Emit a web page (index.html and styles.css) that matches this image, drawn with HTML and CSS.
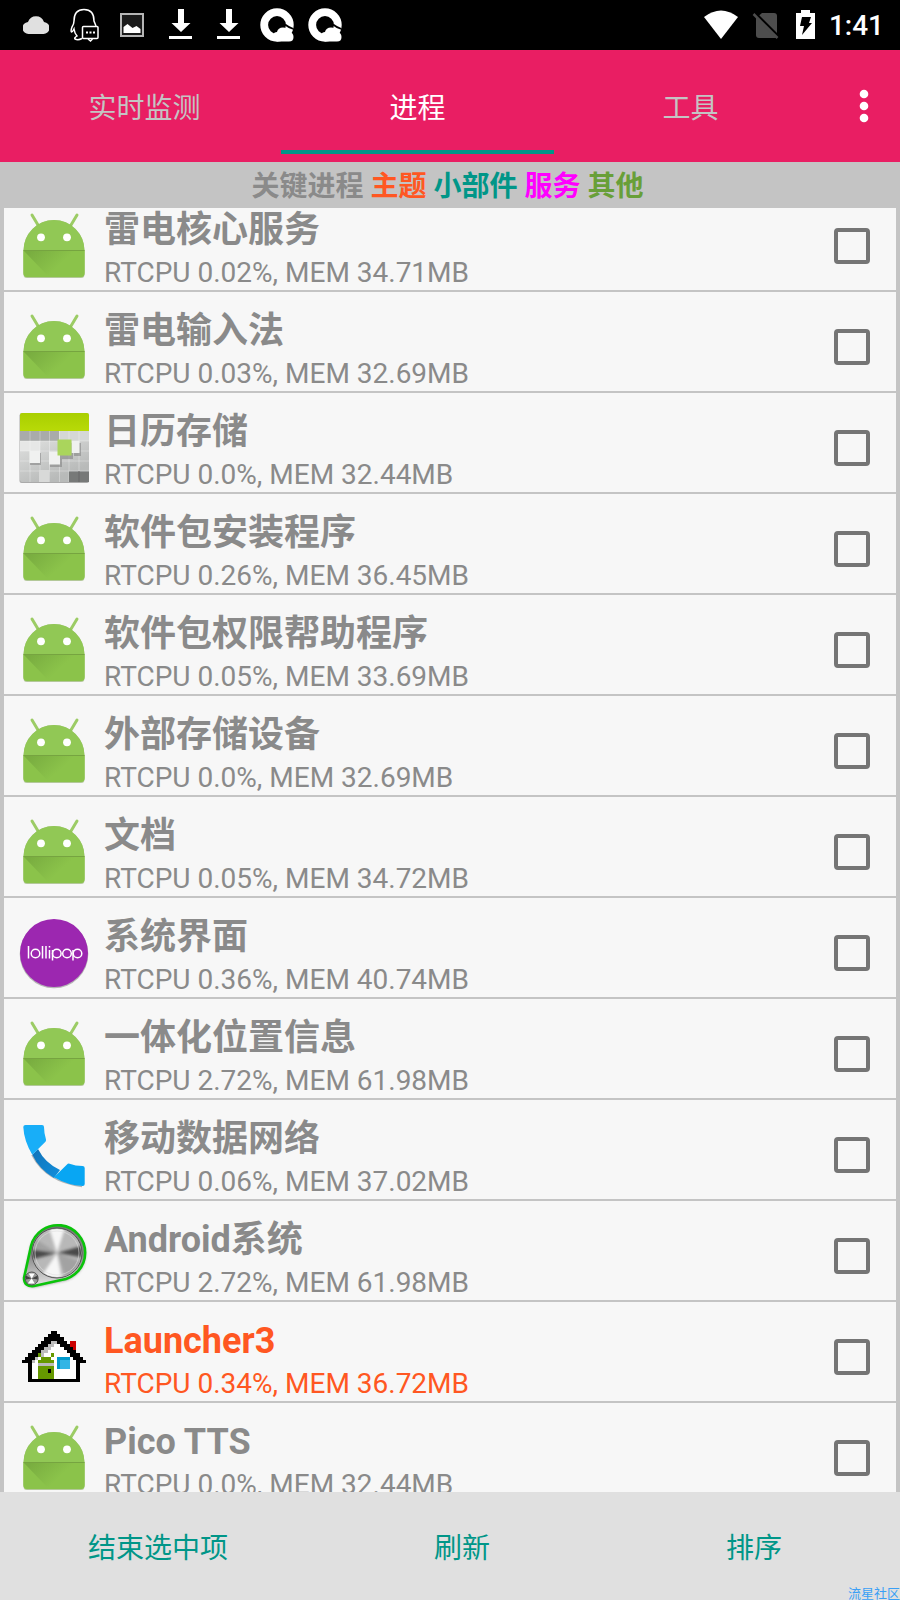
FILE: index.html
```html
<!DOCTYPE html>
<html lang="zh-CN">
<head>
<meta charset="utf-8">
<meta name="viewport" content="width=device-width, initial-scale=1">
<title>进程</title>
<link rel="stylesheet" href="styles.css">
</head>
<body>
<svg class="defs" aria-hidden="true">
  <defs>
    <linearGradient id="fold" gradientUnits="userSpaceOnUse" x1="14" y1="40" x2="34" y2="62">
      <stop offset="0" stop-color="#79ad40"/><stop offset="1" stop-color="#8bc34a"/>
    </linearGradient>
    <linearGradient id="lime" x1="0" y1="0" x2="0" y2="1">
      <stop offset="0" stop-color="#a9cf00"/><stop offset="1" stop-color="#b8da08"/>
    </linearGradient>
    <linearGradient id="tiles" x1="0" y1="0" x2="0.4" y2="1">
      <stop offset="0" stop-color="#c4c6c5"/><stop offset="0.4" stop-color="#dcdddc"/><stop offset="1" stop-color="#b8bab9"/>
    </linearGradient>
    <linearGradient id="handle" x1="0" y1="0" x2="1" y2="1">
      <stop offset="0" stop-color="#1272b8"/><stop offset="1" stop-color="#118fdc"/>
    </linearGradient>
    <linearGradient id="steel" x1="0" y1="0" x2="0" y2="1">
      <stop offset="0" stop-color="#777"/><stop offset="0.5" stop-color="#888"/><stop offset="1" stop-color="#e5e5e5"/>
    </linearGradient>
    <filter id="soft" x="-20%" y="-20%" width="140%" height="140%"><feGaussianBlur stdDeviation="1.6"/></filter>
    <clipPath id="dial"><circle cx="39" cy="33" r="24"/></clipPath>
    <symbol id="droid" viewBox="0 0 72 72">
      <path d="M14 5l6 10M59 5l-6 10" stroke="#9ccc65" stroke-width="3" stroke-linecap="round"/>
      <path d="M5.500 64.500v-24a30.500 30.500 0 0 1 61 0v24q0 3.500-3.500 3.500H9q-3.500 0-3.500-3.500z" fill="#6f9a3c" opacity="0.500"/>
      <path d="M5.500 63v-22.500a30.500 30.500 0 0 1 61 0V63q0 4-4 4h-53q-4 0-4-4z" fill="#91c855"/>
      <path d="M5.500 40.500h61V63q0 4-4 4h-53q-4 0-4-4z" fill="#8bc34a"/>
      <path d="M6 41h50v26H31z" fill="url(#fold)"/>
      <path d="M5.500 40.500h61" stroke="#76a440" stroke-width="1.200"/>
      <circle cx="23" cy="27.300" r="3.900" fill="#fff"/><circle cx="49" cy="27.300" r="3.900" fill="#fff"/>
    </symbol>
    <symbol id="download" viewBox="0 0 24 32">
      <path d="M9 0h6v14h6.500L12 23 2.500 14H9zM0 27h23v3H0z" fill="#fff"/>
    </symbol>
    <symbol id="qcloud" viewBox="0 0 34 34">
      <circle cx="17" cy="17" r="12.800" fill="none" stroke="#fff" stroke-width="7.800"/>
      <path d="M13 27q1-3 4-3 1-4.500 6-4.500 4.500 0 6 4.500 4.500.5 4.500 5 0 4.500-4.500 4.500H17z" fill="#fff"/>
      <path d="M25 16.500q3 2.500 8.500 4.500" fill="none" stroke="#000" stroke-width="1.800"/>
    </symbol>
  </defs>
</svg>
<div class="screen">
  <header>
    <div class="status">
      <div class="status-left">
        <svg width="26" height="20" viewBox="0 0 26 20"><path d="M6 19a6 6 0 0 1-1-12 8.500 8.500 0 0 1 16 0 6 6 0 0 1-1 12z" fill="#e0e0e0"/></svg>
        <svg width="30" height="34" viewBox="0 0 30 34" fill="none" stroke="#fff" stroke-width="1.500"><path d="M4 13C4 5 8 1.500 14 1.500S24 5 24 13l2 5M4 13q0 3-2 6-1.500 4-.5 5 1 0 2.500-3 .5 4 3 7-3 2-2 3 3 1.500 7-.5"/><rect x="12.500" y="18.500" width="15.500" height="12" rx="1"/><path d="M18 31l2.500 2 2-2"/><path d="M16 24.500h2m1.500 0h2m1.500 0h2" stroke-width="2"/></svg>
        <svg width="24" height="24" viewBox="0 0 24 24"><rect x="1" y="1" width="22" height="22" fill="#1a1a1a" stroke="#b5b5b5" stroke-width="2"/><path d="M3.500 20v-6l4-3 5 4 4-2 4 3v4z" fill="#fff"/></svg>
        <svg width="24" height="32"><use href="#download"/></svg>
        <svg width="24" height="32"><use href="#download"/></svg>
        <svg width="34" height="34"><use href="#qcloud"/></svg>
        <svg width="34" height="34"><use href="#qcloud"/></svg>
      </div>
      <div class="status-right">
        <svg width="36" height="30" viewBox="0 0 36 30"><path d="M1 7q17-13 34 0L18 29z" fill="#fff"/></svg>
        <svg width="28" height="28" viewBox="0 0 28 28"><path d="M4 7l6-5h12q3 0 3 3v22H7q-3 0-3-3z" fill="#4d4d4d"/><path d="M3 2l24 24" stroke="#000" stroke-width="3"/><path d="M1.500 3l24 24" stroke="#4d4d4d" stroke-width="2.500"/></svg>
        <svg width="20" height="30" viewBox="0 0 20 30"><path d="M0 3h5V0h9v3h5v26H0z" fill="#fff"/><path d="M6 7h9l-2 6h3L6 25l2-9H4z" fill="#000"/></svg>
        <span class="clock">1:41</span>
      </div>
    </div>
    <nav class="tabs">
      <button class="tab">实时监测</button>
      <button class="tab tab-active">进程</button>
      <button class="tab">工具</button>
      <button class="more" aria-label="更多选项"><svg width="10" height="34" viewBox="0 0 10 34" fill="#fff"><circle cx="5" cy="5" r="4.300"/><circle cx="5" cy="17" r="4.300"/><circle cx="5" cy="29" r="4.300"/></svg></button>
    </nav>
    <p class="legend"><span>关键进程</span> <span class="c-theme">主题</span> <span class="c-widget">小部件</span> <span class="c-service">服务</span> <span class="c-other">其他</span></p>
  </header>
  <main class="list-wrap">
    <ul class="list">
      <li><label class="row"><svg class="icon"><use href="#droid"/></svg><span class="info"><b class="name">雷电核心服务</b><span class="stat">RTCPU 0.02%, MEM 34.71MB</span></span><input class="check" type="checkbox"></label></li>
      <li><label class="row"><svg class="icon"><use href="#droid"/></svg><span class="info"><b class="name">雷电输入法</b><span class="stat">RTCPU 0.03%, MEM 32.69MB</span></span><input class="check" type="checkbox"></label></li>
      <li><label class="row"><svg class="icon" viewBox="0 0 72 72">
        <rect x="1.500" y="1.500" width="69.500" height="69.500" rx="2" fill="#aaa"/>
        <rect x="2" y="1" width="69" height="69" rx="2" fill="url(#tiles)"/>
        <path d="M2 19V3q0-2 2-2h65q2 0 2 2v16z" fill="url(#lime)"/>
        <path d="M2 19h39v10H2z" fill="#a9abaa"/><path d="M41 19h30v10H41z" fill="#d5d7d6"/><path d="M2 29h20v10H2z" fill="#e6e7e6"/>
        <path d="M12 19v51M22 19v51M31.500 19v51M41.500 19v51M51 19v51M61 19v51M2 29h69M2 39h69M2 49h69M2 59h69" stroke="#fff" stroke-opacity="0.300" stroke-width="1"/>
        <path d="M51 59.500h20V70H51z" fill="#777978"/><path d="M61 59v11" stroke="#666"/>
        <path d="M21 58h10v12H21z" fill="#d8d9d8"/>
        <path d="M12 41h11v12H12zM32 42h12v13H32zM42 31h13v16H42zM56 31h7v13h-7z" fill="#777" opacity="0.500"/>
        <path d="M11.500 39H22v12H11.500zM31 39.500h11v13H31zM53.500 29h8v12h-8z" fill="#f0f1f0"/>
        <path d="M39.500 27.500h14v16h-14z" fill="#aad55c"/>
      </svg><span class="info"><b class="name">日历存储</b><span class="stat">RTCPU 0.0%, MEM 32.44MB</span></span><input class="check" type="checkbox"></label></li>
      <li><label class="row"><svg class="icon"><use href="#droid"/></svg><span class="info"><b class="name">软件包安装程序</b><span class="stat">RTCPU 0.26%, MEM 36.45MB</span></span><input class="check" type="checkbox"></label></li>
      <li><label class="row"><svg class="icon"><use href="#droid"/></svg><span class="info"><b class="name">软件包权限帮助程序</b><span class="stat">RTCPU 0.05%, MEM 33.69MB</span></span><input class="check" type="checkbox"></label></li>
      <li><label class="row"><svg class="icon"><use href="#droid"/></svg><span class="info"><b class="name">外部存储设备</b><span class="stat">RTCPU 0.0%, MEM 32.69MB</span></span><input class="check" type="checkbox"></label></li>
      <li><label class="row"><svg class="icon"><use href="#droid"/></svg><span class="info"><b class="name">文档</b><span class="stat">RTCPU 0.05%, MEM 34.72MB</span></span><input class="check" type="checkbox"></label></li>
      <li><label class="row"><svg class="icon" viewBox="0 0 72 72">
        <circle cx="36" cy="37" r="34.300" fill="#888" opacity="0.600"/><circle cx="36" cy="36" r="34" fill="#9c27b0"/>
        <g fill="none" stroke="#fff" stroke-width="1.500"><path d="M10.500 29v12.500M24.500 29v12.500M28 29v12.500M31.500 33v8.500M31.500 29v1.500M34.500 33v10.500M55 33v10.500"/><circle cx="17.500" cy="36.500" r="4.300"/><circle cx="38.800" cy="36.500" r="4.300"/><circle cx="49" cy="36.500" r="4.300"/><circle cx="59.500" cy="36.500" r="4.300"/></g>
      </svg><span class="info"><b class="name">系统界面</b><span class="stat">RTCPU 0.36%, MEM 40.74MB</span></span><input class="check" type="checkbox"></label></li>
      <li><label class="row"><svg class="icon"><use href="#droid"/></svg><span class="info"><b class="name">一体化位置信息</b><span class="stat">RTCPU 2.72%, MEM 61.98MB</span></span><input class="check" type="checkbox"></label></li>
      <li><label class="row"><svg class="icon" viewBox="0 0 72 72">
        <path d="M14 36q14 27 50 31.500" fill="none" stroke="#999" stroke-width="1.500" opacity="0.700"/>
        <path d="M14.300 35.700L20 30q7 14 22 21l-6 8Q21 50 14.300 35.700z" fill="url(#handle)"/>
        <path d="M7.500 6H24q2 0 2 2 0 6 2 12.500.3 1.500-.8 2.500L14.300 35.700Q6 22 5.300 8q0-2 2.200-2z" fill="#18aef8"/>
        <path d="M66.700 49v16q0 2-2 2Q50 66.500 36 58.300L49 45.500q1-1.200 2.500-.8 6 2.200 13 2.300 2.200 0 2.200 2z" fill="#08a6f3"/>
      </svg><span class="info"><b class="name">移动数据网络</b><span class="stat">RTCPU 0.06%, MEM 37.02MB</span></span><input class="check" type="checkbox"></label></li>
      <li><label class="row"><svg class="icon" viewBox="0 0 72 72">
        <path d="M13 27A27.500 27.500 0 1 1 44 61L16 67Q6 67 6 58z" fill="#333" opacity="0.600" filter="url(#soft)"/>
        <path d="M13 26A27.500 27.500 0 1 1 43 60L16 66Q6 67 6 58z" fill="url(#steel)" stroke="#0ac40a" stroke-width="2.600"/>
        <circle cx="39" cy="33" r="25" fill="#b8b8b8" stroke="#555" stroke-width="1"/>
        <g clip-path="url(#dial)"><g filter="url(#soft)">
          <path d="M39 33L4 28v14zM39 33l35-10v16z" fill="#4a4a4a"/>
          <path d="M39 33L27-5h24zM39 33L14 70h32z" fill="#f6f6f6"/>
          <path d="M39 33L4 10v17zM39 33l35 13v22L52 70z" fill="#a2a2a2"/>
        </g></g>
        <circle cx="39" cy="33" r="22" fill="none" stroke="#ddd" stroke-width="1" opacity="0.600"/>
        <circle cx="13.700" cy="58.500" r="6.500" fill="#999" stroke="#555" stroke-width="1"/><path d="M13.700 58.500l-6-3v4zM13.700 58.500l6-3v4z" fill="#444"/><path d="M13.700 58.500l-3-5h6zM13.700 58.500l-4 5h7z" fill="#fff"/>
      </svg><span class="info"><b class="name">Android系统</b><span class="stat">RTCPU 2.72%, MEM 61.98MB</span></span><input class="check" type="checkbox"></label></li>
      <li><label class="row row-theme"><svg class="icon" viewBox="0 0 72 72"><g transform="translate(4 10) scale(3.200)" shape-rendering="crispEdges">
        <path d="M3 9L10 2l7 7v6H3z" fill="#fff"/>
        <path d="M15 3h2v3h-2z" fill="#c00"/><path d="M15 5h1v1h-1z" fill="#900"/>
        <path d="M9 3h2v1H9zM8 4h2v1H8zM7 5h2v1H7zM6 6h2v1H6zM5 7h2v1H5zM4 8h1v1H4zM3 9h1v1H3z" fill="#bdbdbd"/>
        <path d="M9 0h2v1H9zM8 1h4v1H8zM7 2h3v1H7zM10 2h3v1h-3zM6 3h3v1H6zM11 3h3v1h-3zM5 4h3v1H5zM12 4h3v1h-3zM4 5h3v1H4zM13 5h3v1h-3zM3 6h3v1H3zM14 6h3v1h-3zM2 7h3v1H2zM15 7h3v1h-3zM1 8h3v1H1zM16 8h3v1h-3zM0 9h3v1H0zM17 9h3v1h-3zM2 10h1v6H2zM17 10h1v6h-1zM3 15h14v1H3z" fill="#000"/>
        <path d="M5 7h1v1H5zM9 7h1v1H9zM6 8h3v1H6zM5 9h5v1H5zM5 11h5v4H5z" fill="#690"/><path d="M5 10h5v1H5z" fill="#bbb"/><path d="M8 12h1v1H8z" fill="#000"/>
        <path d="M11 8h4v4h-4z" fill="#09c"/><path d="M12 9h3v3h-3z" fill="#33b5e5"/>
      </g></svg><span class="info"><b class="name">Launcher3</b><span class="stat">RTCPU 0.34%, MEM 36.72MB</span></span><input class="check" type="checkbox"></label></li>
      <li><label class="row"><svg class="icon"><use href="#droid"/></svg><span class="info"><b class="name">Pico TTS</b><span class="stat">RTCPU 0.0%, MEM 32.44MB</span></span><input class="check" type="checkbox"></label></li>
    </ul>
  </main>
  <footer class="actions">
    <button class="action action-wide">结束选中项</button>
    <button class="action">刷新</button>
    <button class="action">排序</button>
    <span class="mark">流星社区</span>
  </footer>
</div>
</body>
</html>
```

FILE: styles.css
```css
* { box-sizing: border-box; }
body {
  margin: 0;
  font-family: Roboto, "Noto Sans CJK SC", sans-serif;
  font-size: 28px;
  color: #8a8a8a;
  background: #c4c4c4;
}
button {
  border: 0;
  padding: 0;
  background: none;
  font: inherit;
  color: inherit;
}
.defs { position: absolute; width: 0; height: 0; }
.screen { display: flex; flex-direction: column; height: 100vh; }

.status {
  display: flex;
  justify-content: space-between;
  align-items: center;
  height: 50px;
  padding: 0 16px 0 23px;
  background: #000;
}
.status-left { display: flex; align-items: center; gap: 14px; }
.status-left svg:nth-child(1) { margin-right: 7px; }
.status-left svg:nth-child(2) { margin-right: 6px; }
.status-left svg:nth-child(3) { margin-right: 11px; }
.status-left svg:nth-child(4) { margin-right: 10px; }
.status-left svg:nth-child(5) { margin-right: 5px; }
.status-right { display: flex; align-items: center; gap: 13px; }
.status-right svg:nth-child(2) { margin-right: 3px; }
.clock { font-size: 28px; font-weight: 500; line-height: 50px; padding-top: 2px; color: #fff; }

.tabs {
  display: flex;
  height: 112px;
  padding-left: 8px;
  background: #e91e63;
}
.tab {
  flex: 1;
  margin-bottom: 8px;
  padding-top: 12px;
  border-bottom: 4px solid transparent;
  color: #c4c4c4;
}
.tab-active { border-bottom-color: #009688; color: #fff; }
.more { display: flex; justify-content: center; align-items: center; width: 73px; }

.legend {
  margin: 0;
  padding: 4px 5px 0 0;
  line-height: 42px;
  text-align: center;
  font-weight: bold;
}
.c-theme { color: #ff5722; }
.c-widget { color: #009688; }
.c-service { color: #f0f; }
.c-other { color: #689f38; }

.list-wrap { flex: 1; min-height: 0; overflow: hidden; padding: 0 4px; }
.list { list-style: none; margin: -17px 0 0; padding: 0; }
.list li { border-bottom: 2px solid #c4c4c4; background: #f7f7f7; }
.row {
  display: flex;
  align-items: center;
  padding: 11px 26px 0 14px;
}
.icon { width: 72px; height: 72px; flex: none; }
.info { flex: 1; padding: 3px 0 0 14px; }
.name, .stat { display: block; }
.name { font-size: 36px; line-height: 50px; }
.stat { line-height: 35px; }
.row-theme { color: #ff5722; }
.check {
  appearance: none;
  width: 36px;
  height: 36px;
  margin: 0;
  border: 4px solid #757575;
  border-radius: 4px;
}
.check:checked { background: #009688; }

.actions {
  position: relative;
  display: flex;
  height: 108px;
  background: #e0e0e0;
  color: #009688;
}
.action { flex: 1 0 176px; }
.action-wide { flex-basis: 200px; }
.mark {
  position: absolute;
  right: 0;
  bottom: 0;
  font-size: 13px;
  line-height: 13px;
  color: #3a9ff5;
}
```
